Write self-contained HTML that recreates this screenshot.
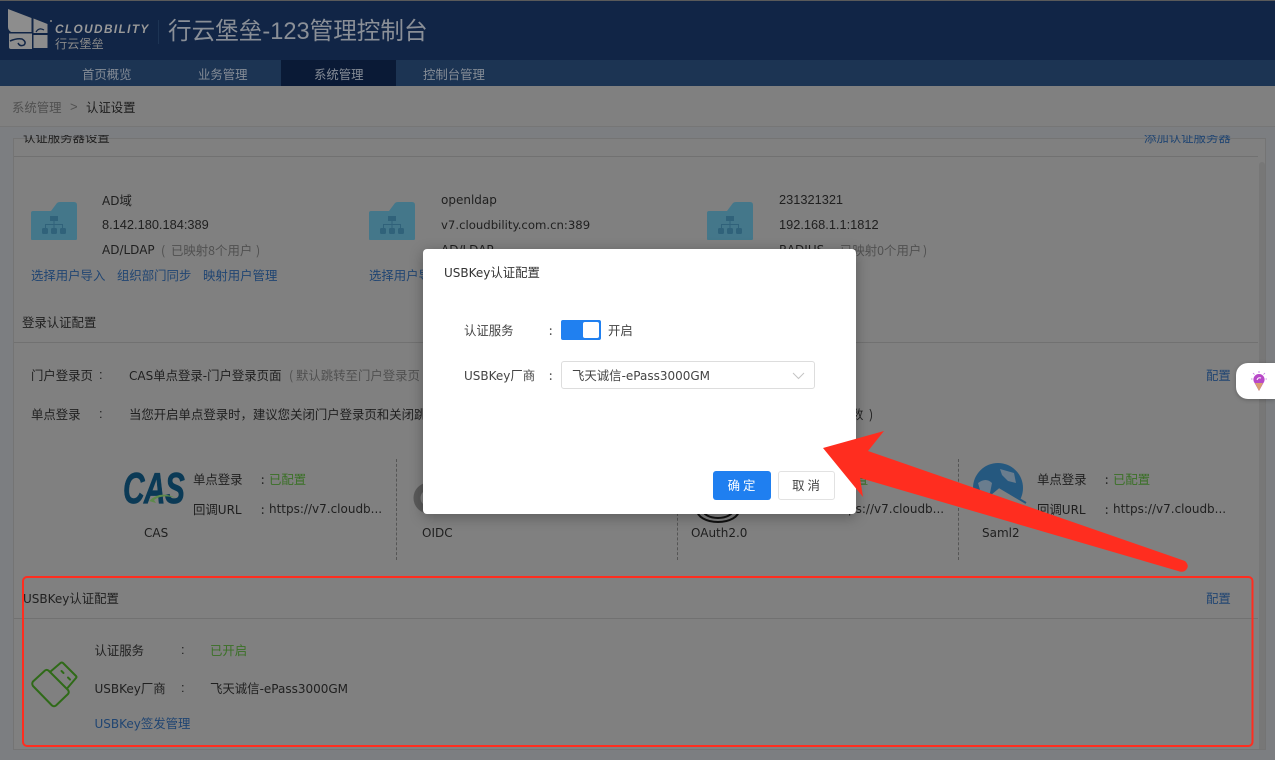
<!DOCTYPE html>
<html lang="zh"><head><meta charset="utf-8"><title>认证设置</title>
<style>
html,body{margin:0;padding:0;width:1275px;height:760px;overflow:hidden;background:#7c7e81}
body{position:relative;font-family:"DejaVu Sans","Noto Sans CJK SC",sans-serif;font-size:12px;color:#1f1f1f}
.a{position:absolute}
.t{position:absolute;white-space:nowrap;line-height:16px;height:16px;font-size:12px}
.t b,.c{font-family:"Noto Sans CJK SC",sans-serif;font-weight:400;font-size:12.4px}
.n{font-family:"Liberation Sans",sans-serif;font-size:12.8px}
.b{color:#204572}.g{color:#3a7026}.m{color:#505050}
.ln{position:absolute;height:1px;background:#717171}
.ds{position:absolute;width:0;top:459px;height:101px;border-left:1px dashed #555}
</style></head><body>
<div class="a" style="left:0;top:0;width:1275px;height:60px;background:#112546;border-top:1px solid #5a5a5a;box-sizing:border-box"></div>
<svg class="a" style="left:0;top:0" width="160" height="60" viewBox="0 0 160 60"><g fill="#8d8d8d"><path d="M8 9L31.500 18V32H11Q8 30 8 27Z"/><path d="M9 33.500H32V49H11Q9 49 9 47Z"/><path d="M33.500 18.500L47.500 24V33H33.500Z"/><path d="M33.500 35H47.500V48H33.500Z"/></g><path d="M10 41Q17 38 22 39Q27 42 24 45Q20 47 18 43" fill="none" stroke="#112546" stroke-width="1.500"/><path d="M36 32Q39 27 44 30" fill="none" stroke="#112546" stroke-width="1.300"/><rect x="158" y="20" width="1" height="24" fill="#1d3454"/><circle cx="51" cy="21" r="1" fill="#8d8d8d"/></svg>
<div class="t" style="left:55px;top:21px;font:italic 700 11.800px/16px 'Liberation Sans',sans-serif;letter-spacing:1.400px;color:#999">CLOUDBILITY</div>
<div class="t" style="left:55px;top:35px;color:#8a8a8a"><b style="font-size:12.200px">行云堡垒</b></div>
<div class="t" style="left:168px;top:16px;height:32px;line-height:32px;font-family:'Liberation Sans','Noto Sans CJK SC',sans-serif;font-size:23.600px;color:#8a8f97">行云堡垒-123管理控制台</div>
<div class="a" style="left:0;top:60px;width:1275px;height:26px;background:#1c3453"></div>
<div class="a" style="left:281px;top:60px;width:115px;height:26px;background:#0a1a36"></div>
<div class="t c" style="left:82px;top:66px;color:#858c96">首页概览</div>
<div class="t c" style="left:198px;top:66px;color:#858c96">业务管理</div>
<div class="t c" style="left:314px;top:66px;color:#858c96">系统管理</div>
<div class="t c" style="left:423px;top:66px;color:#858c96">控制台管理</div>
<div class="a" style="left:0;top:86px;width:1275px;height:41px;background:#808080;border-bottom:1px solid #767676;box-sizing:border-box"></div>
<div class="t c m" style="left:12px;top:99px">系统管理</div>
<div class="t m" style="left:70px;top:99px;font-family:'Liberation Sans',sans-serif;font-size:13px">&gt;</div>
<div class="t c" style="left:86px;top:99px;color:#1c1c1c">认证设置</div>
<div class="a" style="left:13px;top:138px;width:1253px;height:612px;background:#808080;border:1px solid #747474;box-sizing:border-box"></div>
<div class="a" style="left:1259px;top:162px;width:6px;height:587px;background:#777;border-radius:3px 3px 0 0"></div>
<div class="a" style="left:0;top:135px;width:1275px;height:10px;overflow:hidden">
<div class="t c" style="left:23px;top:-6px">认证服务器设置</div>
<div class="t c b" style="left:1144px;top:-6px">添加认证服务器</div>
</div>
<div class="ln" style="left:14px;top:156px;width:1244px"></div>
<div class="ln" style="left:14px;top:342px;width:1244px"></div>
<div class="ln" style="left:14px;top:618px;width:1244px"></div>
<svg width="0" height="0" style="position:absolute"><defs><g id="f"><path d="M0 37V11Q0 9 2 9H20L26 1Q27 0 29 0H43Q46 0 46 3V37Q46 38 44 38H1Q0 38 0 37Z" fill="#44778a"/><g fill="#30627a"><rect x="19" y="14" width="8" height="5"/><rect x="11" y="26" width="6" height="6" rx="1.500"/><rect x="20" y="26" width="6" height="6" rx="1.500"/><rect x="29" y="26" width="6" height="6" rx="1.500"/><path d="M22.500 19h1v3H32v4h-1v-3H23.500v3h-1v-3H15v3h-1v-4h8.500z"/></g></g></defs></svg>
<svg class="a" style="left:31px;top:202px" width="46" height="38"><use href="#f"/></svg>
<svg class="a" style="left:369px;top:202px" width="46" height="38"><use href="#f"/></svg>
<svg class="a" style="left:707px;top:202px" width="46" height="38"><use href="#f"/></svg>
<div class="t" style="left:102px;top:192px">AD<b>域</b></div>
<div class="t n" style="left:102px;top:217px">8.142.180.184:389</div>
<div class="t" style="left:102px;top:242px">AD/LDAP</div>
<div class="t c m" style="left:161px;top:242px">(</div><div class="t c m" style="left:171px;top:242px">已映射8个用户</div><div class="t c m" style="left:256px;top:242px">)</div>
<div class="t c b" style="left:31px;top:267px">选择用户导入</div>
<div class="t c b" style="left:117px;top:267px">组织部门同步</div>
<div class="t c b" style="left:203px;top:267px">映射用户管理</div>
<div class="t" style="left:441px;top:192px">openldap</div>
<div class="t" style="left:441px;top:217px;font-size:11.700px">v7.cloudbility.com.cn:389</div>
<div class="t" style="left:441px;top:242px">AD/LDAP</div>
<div class="t c b" style="left:369px;top:267px">选择用户导入</div>
<div class="t n" style="left:779px;top:192px">231321321</div>
<div class="t n" style="left:779px;top:217px">192.168.1.1:1812</div>
<div class="t" style="left:779px;top:242px">RADIUS</div>
<div class="t c m" style="left:840px;top:242px">已映射0个用户</div><div class="t c m" style="left:923px;top:242px">)</div>
<div class="t c" style="left:22px;top:314px">登录认证配置</div>
<div class="t c" style="left:31px;top:367px">门户登录页</div><div class="t n" style="left:99px;top:367px">:</div>
<div class="t" style="left:129px;top:367px">CAS<b>单点登录</b>-<b>门户登录页面</b></div>
<div class="t c m" style="left:289px;top:367px">(</div><div class="t c m" style="left:296px;top:367px">默认跳转至门户登录页</div>
<div class="t c b" style="left:1206px;top:367px">配置</div>
<div class="t c" style="left:31px;top:406px">单点登录</div>
<div class="t n" style="left:99px;top:406px">:</div>
<div class="t c" style="left:129px;top:406px">当您开启单点登录时，建议您关闭门户登录页和关闭跳转</div>
<div class="t c" style="left:851px;top:406px">数</div><div class="t c" style="left:869px;top:406px">)</div>
<div class="ds" style="left:396px"></div><div class="ds" style="left:677px"></div><div class="ds" style="left:958px"></div>
<div class="a" style="left:123px;top:467px;height:44px;white-space:nowrap;font:italic 700 44px/44px 'Liberation Sans',sans-serif;color:#0b3a56;letter-spacing:-1px;transform:scaleX(.68);transform-origin:0 0;-webkit-text-stroke:.7px #0b3a56">CAS</div>
<svg class="a" style="left:148px;top:490px" width="30" height="14"><path d="M1 11Q12 0 28 8Q14 4 6 10L8 13Z" fill="#5d8a4a"/></svg>
<div class="t c" style="left:193px;top:471px">单点登录</div><div class="t c" style="left:261px;top:471px">:</div><div class="t c g" style="left:269px;top:471px">已配置</div>
<div class="t" style="left:193px;top:501px"><b>回调</b>URL</div><div class="t c" style="left:261px;top:501px">:</div><div class="t" style="left:269px;top:501px">https://v7.cloudb...</div>
<div class="t" style="left:144px;top:525px">CAS</div>
<svg class="a" style="left:408px;top:480px" width="24" height="36"><circle cx="21" cy="18" r="12" fill="none" stroke="#5a5a5a" stroke-width="7"/></svg>
<div class="t" style="left:422px;top:525px">OIDC</div>
<svg class="a" style="left:695px;top:510px" width="46" height="14"><ellipse cx="23" cy="0" rx="21" ry="12" fill="none" stroke="#111" stroke-width="2"/><ellipse cx="23" cy="0" rx="15" ry="8" fill="none" stroke="#111" stroke-width="2"/></svg>
<div class="t" style="left:691px;top:525px">OAuth2.0</div>
<div class="t c g" style="left:831px;top:471px">已配置</div>
<div class="t" style="left:831px;top:501px">https://v7.cloudb...</div>
<svg class="a" style="left:972px;top:463px" width="56" height="46"><circle cx="26" cy="25" r="25" fill="#25587f"/><path d="M6 20Q14 14 20 20L18 30L10 34ZM28 6L42 10L44 20L36 18L30 12ZM24 34L32 30L30 38Z" fill="#6a7d8e"/><path d="M0 46H56V40L28 24L8 38L0 38Z" fill="#808080"/><path d="M8 40L27 24L54 40M14 40V46" fill="none" stroke="#25587f" stroke-width="2"/></svg>
<div class="t c" style="left:1037px;top:471px">单点登录</div><div class="t c" style="left:1105px;top:471px">:</div><div class="t c g" style="left:1113px;top:471px">已配置</div>
<div class="t" style="left:1037px;top:501px"><b>回调</b>URL</div><div class="t c" style="left:1105px;top:501px">:</div><div class="t" style="left:1113px;top:501px">https://v7.cloudb...</div>
<div class="t" style="left:982px;top:525px">Saml2</div>
<div class="t" style="left:23px;top:590px">USBKey<b>认证配置</b></div>
<div class="t c b" style="left:1206px;top:590px">配置</div>
<svg class="a" style="left:30px;top:661px" width="48" height="48" viewBox="0 0 48 48"><g fill="none" stroke="#2f6a18" stroke-width="2" stroke-linejoin="round" stroke-linecap="round"><path d="M3 20.500L15 9.500Q17 8 19 10L38 29Q39.500 31 38 33L26 44.500Q24 46 22 44.500L3 25Q1.500 22.500 3 20.500Z"/><path d="M20 11L30.500 2Q32 1 33 2L46 15Q47 16 46 17L37.500 27"/><path d="M31.500 10L33.500 12M38 16.500L40 18.500"/></g></svg>
<div class="t c" style="left:94.500px;top:642px">认证服务</div><div class="t n" style="left:181px;top:642px">:</div><div class="t c g" style="left:210px;top:642px">已开启</div>
<div class="t" style="left:94.500px;top:680px">USBKey<b>厂商</b></div><div class="t n" style="left:181px;top:680px">:</div><div class="t" style="left:210px;top:680px"><b>飞天诚信</b>-ePass3000GM</div>
<div class="t b" style="left:94.500px;top:715px">USBKey<b>签发管理</b></div>
<div class="a" style="left:1236px;top:363px;width:39px;height:36px;background:#fff;border-radius:12px 0 0 12px;box-shadow:0 1px 4px rgba(0,0,0,.25)"></div>
<svg class="a" style="left:1250px;top:371px" width="18" height="22" viewBox="0 0 18 22"><g stroke="#c070e0" stroke-width=".8"><path d="M9 0V2M3 2L4.500 3.500M15 2L13.500 3.500M1 8H2.500M17 8H15.500"/></g><path d="M9 3a5.500 5.500 0 0 1 5 8L9 20L4 11a5.500 5.500 0 0 1 5-8Z" fill="#b848c8"/><path d="M5 12L13 12L9 20Z" fill="#d8a070"/><path d="M7 9Q8 6 11 7" stroke="#fff" fill="none"/></svg>
<div class="a" style="left:423px;top:249px;width:433px;height:265px;background:#fff;border-radius:4px;box-shadow:0 3px 14px rgba(0,0,0,.3)"></div>
<div class="t" style="left:444px;top:264px;color:#333">USBKey<b>认证配置</b></div>
<div class="t c" style="left:464px;top:322px;color:#444">认证服务</div><div class="t c" style="left:549px;top:322px;color:#444">:</div>
<div class="a" style="left:561px;top:320px;width:40px;height:20px;background:#2080f0;border-radius:2px"></div>
<div class="a" style="left:583px;top:322px;width:16px;height:16px;background:#fff;border-radius:2px"></div>
<div class="t c" style="left:608px;top:322px;color:#444">开启</div>
<div class="t" style="left:464px;top:367px;color:#444">USBKey<b>厂商</b></div><div class="t c" style="left:549px;top:367px;color:#444">:</div>
<div class="a" style="left:561px;top:361px;width:254px;height:28px;border:1px solid #ddd;border-radius:3px;box-sizing:border-box"></div>
<div class="t" style="left:572px;top:367px;color:#444"><b>飞天诚信</b>-ePass3000GM</div>
<svg class="a" style="left:792px;top:372px" width="13" height="8"><path d="M1 1L6.500 6.500L12 1" fill="none" stroke="#c4c4c4"/></svg>
<div class="a c" style="left:713px;top:471px;width:58px;height:29px;line-height:29px;background:#1f7ff0;border-radius:3px;color:#fff;text-align:center;letter-spacing:3px;text-indent:2px">确定</div>
<div class="a c" style="left:778px;top:471px;width:57px;height:29px;line-height:27px;border:1px solid #e2e2e2;box-sizing:border-box;border-radius:3px;color:#444;text-align:center;letter-spacing:3px;text-indent:2px;background:#fff">取消</div>
<svg class="a" style="left:0;top:0;pointer-events:none" width="1275" height="760"><rect x="23" y="577" width="1229.500" height="169" rx="4" fill="none" stroke="#ff2d1f" stroke-width="2"/><path d="M823 448L884 431L868 451L1185 561Q1190 566 1186 570Q1183 573 1178 571L860 478L863 497Z" fill="#ff2d1f"/></svg>
</body></html>
